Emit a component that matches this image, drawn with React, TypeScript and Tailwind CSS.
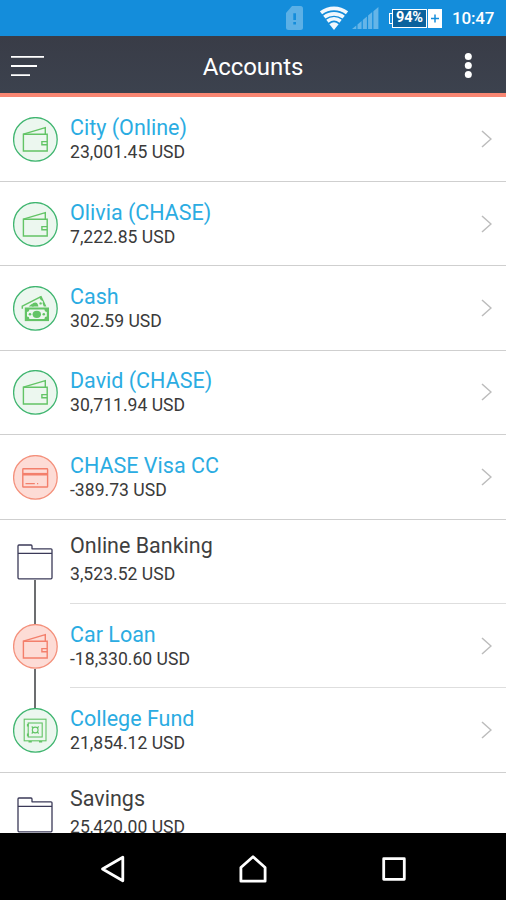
import React from "react";
import clsx from "clsx";

type IconName = "wallet" | "cash" | "card" | "safe" | "folder";

interface Account {
  name: string;
  balance: string;
  icon: IconName;
  negative?: boolean;
  lineAbove?: boolean;
  lineBelow?: boolean;
  inset?: boolean; // divider starts at the text column
}

const accounts: Account[] = [
  { name: "City (Online)", balance: "23,001.45 USD", icon: "wallet" },
  { name: "Olivia (CHASE)", balance: "7,222.85 USD", icon: "wallet" },
  { name: "Cash", balance: "302.59 USD", icon: "cash" },
  { name: "David (CHASE)", balance: "30,711.94 USD", icon: "wallet" },
  { name: "CHASE Visa CC", balance: "-389.73 USD", icon: "card", negative: true },
  { name: "Online Banking", balance: "3,523.52 USD", icon: "folder", lineBelow: true, inset: true },
  { name: "Car Loan", balance: "-18,330.60 USD", icon: "wallet", negative: true, lineAbove: true, lineBelow: true, inset: true },
  { name: "College Fund", balance: "21,854.12 USD", icon: "safe", lineAbove: true },
  { name: "Savings", balance: "25,420.00 USD", icon: "folder", lineBelow: true },
];

const WalletIcon = () => (
  <g strokeWidth="1.4">
    <path d="M10.4 17.2H34.2V34H10.4Z" />
    <path d="M10.4 17.2L32.3 10.7V17.2" />
    <path d="M34.2 24.6H28.9V27.7H34.2" />
  </g>
);

const CashIcon = () => (
  <g>
    <path d="M9.3 22.8V20.2L28 10.6" strokeWidth="1.5" />
    <path d="M15.6 20.6L18.6 18L21 20.6Z" fill="currentColor" stroke="none" />
    <path d="M19 20.6A3 3 0 0 1 25 18.8L25.4 20.6Z" fill="currentColor" stroke="none" />
    <circle cx="27.6" cy="17.4" r="1.2" fill="currentColor" stroke="none" />
    <path d="M26 11.2L28.4 9.8L33.4 20.6H30.8L29.6 17.6L30 15.4L27.6 13.8Z" fill="currentColor" stroke="none" />
    <rect x="11.8" y="21.5" width="24.2" height="13.6" fill="currentColor" stroke="none" />
    <path d="M16.4 23.6H31.4A2.4 2.4 0 0 0 33.8 26V30.6A2.4 2.4 0 0 0 31.4 33H16.4A2.4 2.4 0 0 0 14 30.6V26A2.4 2.4 0 0 0 16.4 23.6Z" fill="#ecf7ef" stroke="none" />
    <ellipse cx="23.8" cy="28.3" rx="4.2" ry="3.6" fill="currentColor" stroke="none" />
    <circle cx="17" cy="28.3" r="1.3" fill="currentColor" stroke="none" />
    <circle cx="30.8" cy="28.3" r="1.3" fill="currentColor" stroke="none" />
  </g>
);

const CardIcon = () => (
  <g strokeWidth="1.4">
    <rect x="9.8" y="13.8" width="24.8" height="18.2" rx="0.6" />
    <path d="M10 19.2H34.6" strokeWidth="2.6" />
    <path d="M12.5 28.6H21.8M24 28.6H25.2" strokeWidth="1.2" />
  </g>
);

const SafeIcon = () => (
  <g strokeWidth="1.1">
    <rect x="11.2" y="11.2" width="21.8" height="21.6" />
    <rect x="15.2" y="15" width="14" height="14" />
    <circle cx="22.2" cy="22" r="2.9" />
    <path d="M18.7 18.5L20.2 20M25.7 18.5L24.2 20M18.7 25.5L20.2 24M25.7 25.5L24.2 24" />
    <path d="M14.8 16V18.6M14.8 25.6V28.2" strokeWidth="1.8" />
    <path d="M15.5 33.8H18.8M26 33.8H29.2" strokeWidth="1.4" />
  </g>
);

const FolderIcon = () => (
  <svg width="36" height="36" viewBox="0 0 36 36" fill="none" stroke="#3b3a58" strokeWidth="1.3" strokeLinejoin="round">
    <path d="M1 33.5V2Q1 1 2 1H14Q15 1 15 2V4.8H34Q35 4.8 35 5.8V33.5Q35 34.8 34 34.8H2Q1 34.8 1 33.5Z" />
    <path d="M1 9.3H35" />
  </svg>
);

const icons = {
  wallet: WalletIcon,
  cash: CashIcon,
  card: CardIcon,
  safe: SafeIcon,
};

const AccountIcon = ({ icon, negative }: { icon: IconName; negative?: boolean }) => {
  if (icon === "folder") return <FolderIcon />;
  const Glyph = icons[icon];
  return (
    <svg
      width="45"
      height="45"
      viewBox="0 0 45 45"
      fill="none"
      stroke="currentColor"
      className={negative ? "text-[#f37f6b]" : "text-[#63c466]"}
    >
      <circle
        cx="22.4"
        cy="22.4"
        r="21.8"
        strokeWidth="1.3"
        fill={negative ? "#fddcd6" : "#ecf7ef"}
        stroke={negative ? "#f4907b" : "#3fb56f"}
      />
      <Glyph />
    </svg>
  );
};

const StatusBar = () => (
  <div className="flex h-9 shrink-0 items-center bg-[#148ddb] pl-[286px] text-white">
    <svg width="17" height="24" viewBox="0 0 17 24">
      <path d="M6 0H14.5Q17 0 17 2.5V21.5Q17 24 14.5 24H2.5Q0 24 0 21.5V7Z" fill="#5cb0e6" />
      <path d="M7.3 7.2H10V14H7.3ZM7.3 16H10V18.6H7.3Z" fill="#148ddb" />
    </svg>
    <svg className="ml-[17px]" width="28" height="24" viewBox="0 0 28 24" fill="none" stroke="#f1f8fd" strokeWidth="3.7">
      <path d="M1 6.9A21.2 21.2 0 0 1 27 6.9" />
      <path d="M4.3 11.1A16 16 0 0 1 23.7 11.1" />
      <path d="M7.4 15.2A10.8 10.8 0 0 1 20.6 15.2" />
      <path d="M9.4 18.2A7.3 7.3 0 0 1 18.6 18.2L14 24Z" fill="#f1f8fd" stroke="none" />
    </svg>
    <svg className="ml-1" width="27" height="22" viewBox="0 0 27 22" fill="#65b5e8">
      <path d="M0 22L4.3 18.4V22ZM5.5 22V17.5L9.6 14V22ZM10.8 22V13L14.9 9.5V22ZM16.1 22V8.6L20.2 5V22ZM21.4 22V4.2L26.4 0V22Z" />
    </svg>
    <div className="ml-[10px] flex h-5 items-center">
      <div className="h-[11px] w-[3px] border-y border-l border-white" />
      <div className="flex h-[19px] w-[35px] items-center justify-center border border-white bg-[#0b629d] text-[14.5px] font-bold tracking-[-0.2px]">
        94%
      </div>
      <svg width="15" height="19" viewBox="0 0 15 19">
        <rect x="1" width="14" height="19" fill="#fff" />
        <path d="M4 9.5H12M8 5.5V13.5" stroke="#148ddb" strokeWidth="1.5" />
      </svg>
    </div>
    <span className="ml-[10px] pt-0.5 text-[17px] font-medium tracking-[-0.2px]">10:47</span>
  </div>
);

const Header = () => (
  <header className="flex h-[61px] shrink-0 items-center border-b-4 border-[#f98672] bg-gradient-to-b from-[#393c47] to-[#3c424e] pt-[3px] text-white">
    <svg className="ml-[11px]" width="33" height="22" viewBox="0 0 33 22" stroke="#fff" strokeWidth="1.8">
      <path d="M0 1.9H33M0 11H26M0 20.1H19" />
    </svg>
    <h1 className="flex-1 pr-[2px] pt-[2px] text-center text-[24px] leading-7 tracking-[-0.1px]">Accounts</h1>
    <svg className="mr-[34px]" width="8" height="26" viewBox="0 0 8 26" fill="#fff">
      <circle cx="4.3" cy="3.6" r="3.5" />
      <circle cx="4.3" cy="12.6" r="3.5" />
      <circle cx="4.3" cy="21.5" r="3.5" />
    </svg>
  </header>
);

const AccountRow = ({ account }: { account: Account }) => {
  const isGroup = account.icon === "folder";
  return (
    <li className="flex h-[84.4px] shrink-0">
      <div
        className={clsx(
          "flex w-[70px] flex-col items-center border-b",
          account.inset ? "border-transparent" : "border-[#cfcfcf]"
        )}
      >
        <div className={clsx("w-[1.5px] flex-1", account.lineAbove && "bg-[#6c6e70]")} />
        <AccountIcon icon={account.icon} negative={account.negative} />
        <div className={clsx("-mb-px w-[1.5px] flex-1", account.lineBelow && "bg-[#6c6e70]")} />
      </div>
      <div
        className={clsx(
          "flex flex-1 items-center justify-between border-b pr-[14px]",
          account.inset ? "border-[#dedede]" : "border-[#cfcfcf]"
        )}
      >
        <div className={clsx("flex flex-col", isGroup ? "gap-1 pb-[3px]" : "pt-[2px]")}>
          <span className={clsx("text-[21.5px] leading-6", isGroup ? "text-[#3f3f3f]" : "text-[#2bace2]")}>
            {account.name}
          </span>
          <span className="text-[17.6px] leading-6 text-[#3a3a3a]">{account.balance}</span>
        </div>
        {!isGroup && (
          <svg width="11" height="18" viewBox="0 0 11 18" fill="none" stroke="#bcbcbc" strokeWidth="1.5">
            <path d="M1 1L10 9L1 17" />
          </svg>
        )}
      </div>
    </li>
  );
};

const NavBar = () => (
  <nav className="flex h-[67px] shrink-0 items-center bg-black pt-1 pl-[100px]">
    <svg width="26" height="28" viewBox="0 0 26 28" fill="none" stroke="#fff" strokeWidth="2.8" strokeLinejoin="round">
      <path d="M2.5 14L22.8 2.2V25.8Z" />
    </svg>
    <svg className="ml-[113px]" width="28" height="28" viewBox="0 0 28 28" fill="none" stroke="#fff" strokeWidth="2.8" strokeLinejoin="round">
      <path d="M1.9 12.5L14 1.8L26.1 12.5V26.2H1.9Z" />
    </svg>
    <svg className="ml-[115px]" width="24" height="24" viewBox="0 0 24 24" fill="none" stroke="#fff" strokeWidth="2.8" strokeLinejoin="round">
      <rect x="1.7" y="1.7" width="20.6" height="20.6" />
    </svg>
  </nav>
);

const App = () => {
  return (
    <div className="flex h-[900px] w-[506px] flex-col overflow-hidden bg-white font-[Roboto,sans-serif]">
      <StatusBar />
      <Header />
      <ul className="flex min-h-0 flex-1 flex-col overflow-hidden pt-[0.6px]">
        {accounts.map((account) => (
          <AccountRow key={account.name} account={account} />
        ))}
      </ul>
      <NavBar />
    </div>
  );
};

export default App;
